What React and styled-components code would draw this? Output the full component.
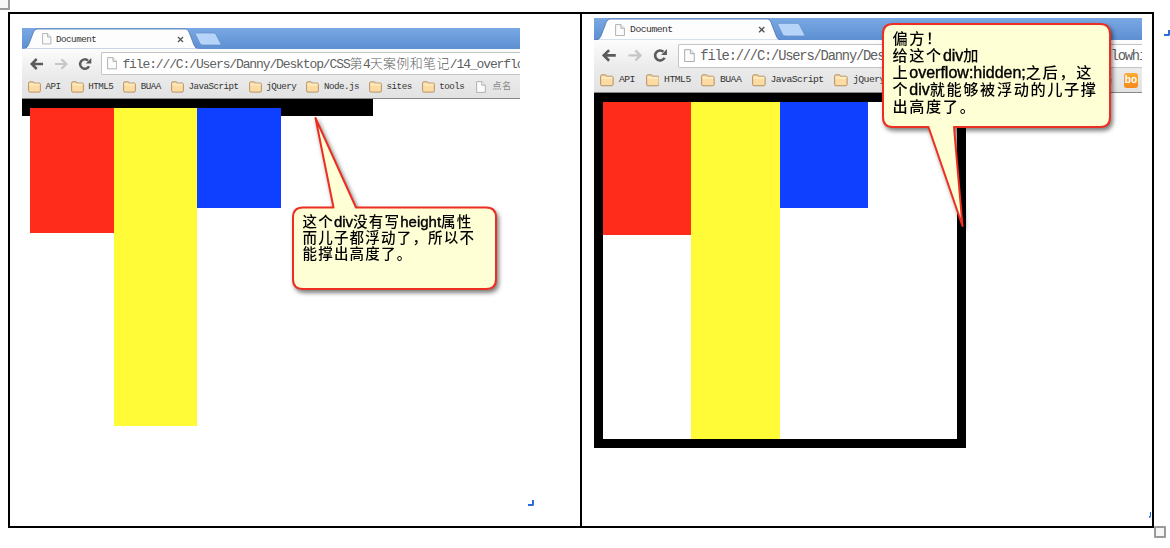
import React from "react";
import styled, { createGlobalStyle } from "styled-components";

const GlobalStyle = createGlobalStyle`
  * { box-sizing: border-box; }
  body { margin: 0; background: #fff; overflow: hidden; }
`;

const mono = `"Liberation Mono", "Noto Sans CJK SC", monospace`;

const Sheet = styled.main`
  position: relative;
  width: 1170px;
  height: 548px;
  padding: 12px 0 0 8px;
  overflow: hidden;
`;

const Table = styled.div`
  display: grid;
  grid-template-columns: 572px 1fr;
  width: 1146px;
  height: 516px;
  border: 2px solid #000;
`;

const Cell = styled.section`
  padding: ${(p) => p.$pad};
  & + & { padding-left: 12px; }
  &:first-child { border-right: 2px solid #000; }
`;

const Window = styled.div`
  width: ${(p) => p.$width}px;
  zoom: ${(p) => p.$zoom};
`;

const Chrome = styled.header`
  height: 71px;
  display: flex;
  flex-direction: column;
  overflow: hidden;
  background: linear-gradient(#fdfdfd 20px, #ebebeb 47px, #e2e2e2 70px);
  border-bottom: 1px solid #888;
`;

const TabStrip = styled.div`
  position: relative;
  flex: none;
  height: 21px;
  background: linear-gradient(#79a8e3, #5d8fd2);
`;

const TabShape = styled.svg`
  position: absolute;
  left: 0;
  top: 0;
`;

const TabContent = styled.div`
  position: relative;
  display: flex;
  align-items: center;
  width: 162px;
  height: 21px;
  padding: 1px 0 0 20px;
`;

const TabTitle = styled.span`
  flex: 1;
  margin-left: 4.5px;
  padding-top: 1px;
  font: 9.2px/14px ${mono};
  letter-spacing: -0.5px;
  color: #333;
`;

const Toolbar = styled.div`
  display: flex;
  flex: none;
  align-items: center;
  height: 28px;
  padding: 1px 0 0 8px;
`;

const NavIcons = styled.svg`
  flex: none;
  margin-right: 9px;
`;

const AddressBar = styled.div`
  display: flex;
  align-items: center;
  flex: 1;
  min-width: 0;
  height: 22.5px;
  padding-left: 5px;
  overflow: hidden;
  background: #fff;
  border: 1px solid #c4c4c4;
  border-right: 0;
  border-radius: 2px 0 0 2px;
`;

const Url = styled.span`
  margin-left: 5px;
  font: 13px/20px ${mono};
  letter-spacing: -1.12px;
  white-space: nowrap;
  color: #606060;
`;

const UrlHan = styled.span`
  font-family: "Noto Sans CJK SC", sans-serif;
  font-weight: 300;
  letter-spacing: 0.36px;
`;

const Bookmarks = styled.nav`
  display: flex;
  align-items: center;
  gap: 10.1px;
  height: 20px;
  padding-left: 6px;
`;

const Bookmark = styled.span`
  display: flex;
  align-items: center;
  gap: ${(p) => (p.$muted ? 6 : 4.5)}px;
  flex: none;
  margin-left: ${(p) => (p.$muted ? 1.8 : 0)}px;
  font: 9.2px/14px ${mono};
  letter-spacing: ${(p) => (p.$muted ? 0.6 : -0.5)}px;
  color: ${(p) => (p.$muted ? "#888" : "#333")};
`;

const BoBadge = styled.span`
  width: 14px;
  height: 14px;
  margin-left: auto;
  margin-right: 4px;
  border-radius: 2.5px;
  background: linear-gradient(#fbab35, #f58a1c);
  color: #fff;
  font: bold 9.5px/12.5px "Liberation Sans", sans-serif;
  text-align: center;
`;

const DemoBox = styled.div`
  width: 351px;
  padding: 8.5px 8.4px 7.9px;
  background: #000;
`;

const DemoContent = styled.div`
  display: flex;
  align-items: flex-start;
  height: ${(p) => (p.$collapsed ? "0.4px" : "auto")};
  background: ${(p) => (p.$collapsed ? "#000" : "#fff")};
`;

const Child = styled.div`
  flex: none;
  width: 83.4px;
  height: ${(p) => p.$height}px;
  background: ${(p) => p.$color};
`;

const Callout = styled.aside`
  position: absolute;
  left: ${(p) => p.$x}px;
  top: ${(p) => p.$y}px;
  filter: drop-shadow(2px 3px 2px rgba(0, 0, 0, 0.5));
`;

const CalloutShape = styled.svg`
  display: block;
  overflow: visible;
`;

const Note = styled.p`
  position: absolute;
  left: 10.5px;
  top: ${(p) => p.$top}px;
  margin: 0;
  font-family: "Noto Sans CJK SC", sans-serif;
  font-weight: 500;
  font-size: ${(p) => p.$size}px;
  line-height: ${(p) => p.$line}px;
  letter-spacing: ${(p) => p.$track}px;
  white-space: nowrap;
  color: #000;
`;

const Latin = styled.span`
  font-family: "Liberation Sans", sans-serif;
  font-size: ${(p) => p.$size}px;
  line-height: 0;
  letter-spacing: 0;
  -webkit-text-stroke: 0.4px #000;
`;

const Mark = styled.i`
  position: absolute;
  left: ${(p) => p.$x}px;
  top: ${(p) => p.$y}px;
  width: ${(p) => p.$w || 6}px;
  height: 6px;
  border: solid #2a6ce0;
  border-width: 0 ${(p) => (p.$w ? 1 : 2)}px 2px 0;
  border-bottom-right-radius: 2px;
`;

const Handle = styled.i`
  position: absolute;
  left: ${(p) => p.$x}px;
  top: ${(p) => p.$y}px;
  width: 12px;
  height: 12px;
  border: 2px solid #999;
  border-radius: 1px;
  background: #f6f6f6;
`;

const FixedSvg = styled.svg`
  flex: none;
`;

const PageIcon = ({ h = 12 }) => (
  <FixedSvg width={(h * 10) / 12} height={h} viewBox="0 0 10 12">
    <path d="M.6.6h5.2l3.5 3.6v7.2H.6z" fill="#fbfbfb" stroke="#aaa" strokeWidth=".9" />
    <path d="M5.8.6v3.6h3.5" fill="#eee" stroke="#aaa" strokeWidth=".9" />
  </FixedSvg>
);

const FolderIcon = () => (
  <FixedSvg width="13" height="12" viewBox="0 0 13 12">
    <path
      d="M.6 2.2q0-1.4 1.300-1.400h3q1 0 1.200 1.300h5q1.300 0 1.300 1.200v6.500q0 1.300-1.300 1.300H1.900Q.6 11.100.6 9.800z"
      fill="#fcdca2"
      stroke="#b08a60"
      strokeWidth=".9"
    />
    <path d="M1.400 4h10.200M1.400 3.100h10.200" stroke="#fff0c8" strokeWidth=".8" />
  </FixedSvg>
);

const links = ["API", "HTML5", "BUAA", "JavaScript", "jQuery", "Node.js", "sites", "tools"];

function Browser({ width, zoom, file, collapsed, badge }) {
  return (
    <Window $width={width} $zoom={zoom}>
      <Chrome>
        <TabStrip>
          <TabShape width="210" height="21" viewBox="0 0 210 21">
            <path d="M0 21Q5 21 6.500 17L11.500 4Q12.700 1 15 1H163.500Q166 1 167 4L172 17Q173.500 21 177 21z" fill="#fdfdfd" stroke="#4f76ad" strokeWidth=".8" />
            <path d="M0 21.500H177" stroke="#fdfdfd" strokeWidth="1.500" />
            <path d="M174.500 5H191.500Q193.300 5 194 6.500L198.600 15.500Q199.200 17 197.500 17H181Q179 17 178 15.500L173.500 6.500Q173 5 174.500 5z" fill="#b5d4f8" stroke="#638fc8" strokeWidth=".7" />
          </TabShape>
          <TabContent>
            <PageIcon h={11.5} />
            <TabTitle>Document</TabTitle>
            <FixedSvg width="7" height="7" viewBox="0 0 7 7">
              <path d="M1 1l5 5M6 1L1 6" stroke="#555" strokeWidth="1.300" />
            </FixedSvg>
          </TabContent>
        </TabStrip>
        <Toolbar>
          <NavIcons width="62" height="14" viewBox="0 0 62 14" fill="none" strokeWidth="2.500">
            <path d="M13 7H2M6.700 2L1.700 7l5 5" stroke="#5b5b5b" />
            <path d="M25 7h10.500M31.500 2.200l4.800 4.800-4.800 4.800" stroke="#c6c6c6" strokeWidth="2.200" />
            <path d="M59 9.200A4.700 4.700 0 1 1 58 3.600" stroke="#5b5b5b" />
            <path d="M61.300 1v5.500h-5.500z" fill="#5b5b5b" />
          </NavIcons>
          <AddressBar>
            <PageIcon h={12.5} />
            <Url>
              file:///C:/Users/Danny/Desktop/CSS<UrlHan>第</UrlHan>4<UrlHan>天案例和笔记</UrlHan>/{file}
            </Url>
          </AddressBar>
        </Toolbar>
        <Bookmarks>
          {links.map((name) => (
            <Bookmark key={name}>
              <FolderIcon />
              {name}
            </Bookmark>
          ))}
          <Bookmark $muted>
            <PageIcon h={12} />
            点名
          </Bookmark>
          {badge && <BoBadge>bo</BoBadge>}
        </Bookmarks>
      </Chrome>
      <DemoBox>
        <DemoContent $collapsed={collapsed}>
          <Child $height={125.5} $color="#ff2c1b" />
          <Child $height={318} $color="#fffb36" />
          <Child $height={100} $color="#0f3fff" />
        </DemoContent>
      </DemoBox>
    </Window>
  );
}

const calloutPaint = { fill: "#ffffd5", stroke: "#ed2f23", strokeWidth: 2, strokeLinejoin: "round" };

export default function App() {
  return (
    <>
      <GlobalStyle />
      <Sheet>
        <Table>
          <Cell $pad="14px 0 0 12px">
            <Browser width={498} zoom={1} file="14_overflow.html" collapsed />
          </Cell>
          <Cell $pad="4px 0 0 12px">
            <Browser width={517} zoom={1.06} file="14_overflowhidden.html" badge />
          </Cell>
        </Table>

        <Callout $x={292} $y={118}>
          <CalloutShape width="205" height="172">
            <path d="M11 89.500H41.500L23.500 0 64 89.500H194Q204 89.500 204 99.500V161Q204 171 194 171H11Q1 171 1 161V99.500Q1 89.500 11 89.500z" {...calloutPaint} />
          </CalloutShape>
          <Note $top={95} $size={14.5} $line={16} $track={1.2}>
            这个<Latin $size={15}>div</Latin>没有写<Latin $size={15}>height</Latin>属性
            <br />
            而儿子都浮动了，所以不
            <br />
            能撑出高度了。
          </Note>
        </Callout>

        <Callout $x={882} $y={23}>
          <CalloutShape width="230" height="205">
            <path d="M11 1H218Q228 1 228 11V94Q228 104 218 104H72L80.500 203 46.500 104H11Q1 104 1 94V11Q1 1 11 1z" {...calloutPaint} />
          </CalloutShape>
          <Note $top={6} $size={15.2} $line={17} $track={1.6}>
            偏方！
            <br />
            给这个<Latin $size={16}>div</Latin>加
            <br />
            上<Latin $size={16}>overflow:hidden;</Latin>之后，这
            <br />
            个<Latin $size={16}>div</Latin>就能够被浮动的儿子撑
            <br />
            出高度了。
          </Note>
        </Callout>

        <Mark $x={528} $y={500} />
        <Mark $x={1149} $y={512} $w={2} />
        <Mark $x={1164} $y={30} />
        <Handle $x={-2} $y={-2} />
        <Handle $x={1154} $y={526} />
      </Sheet>
    </>
  );
}
